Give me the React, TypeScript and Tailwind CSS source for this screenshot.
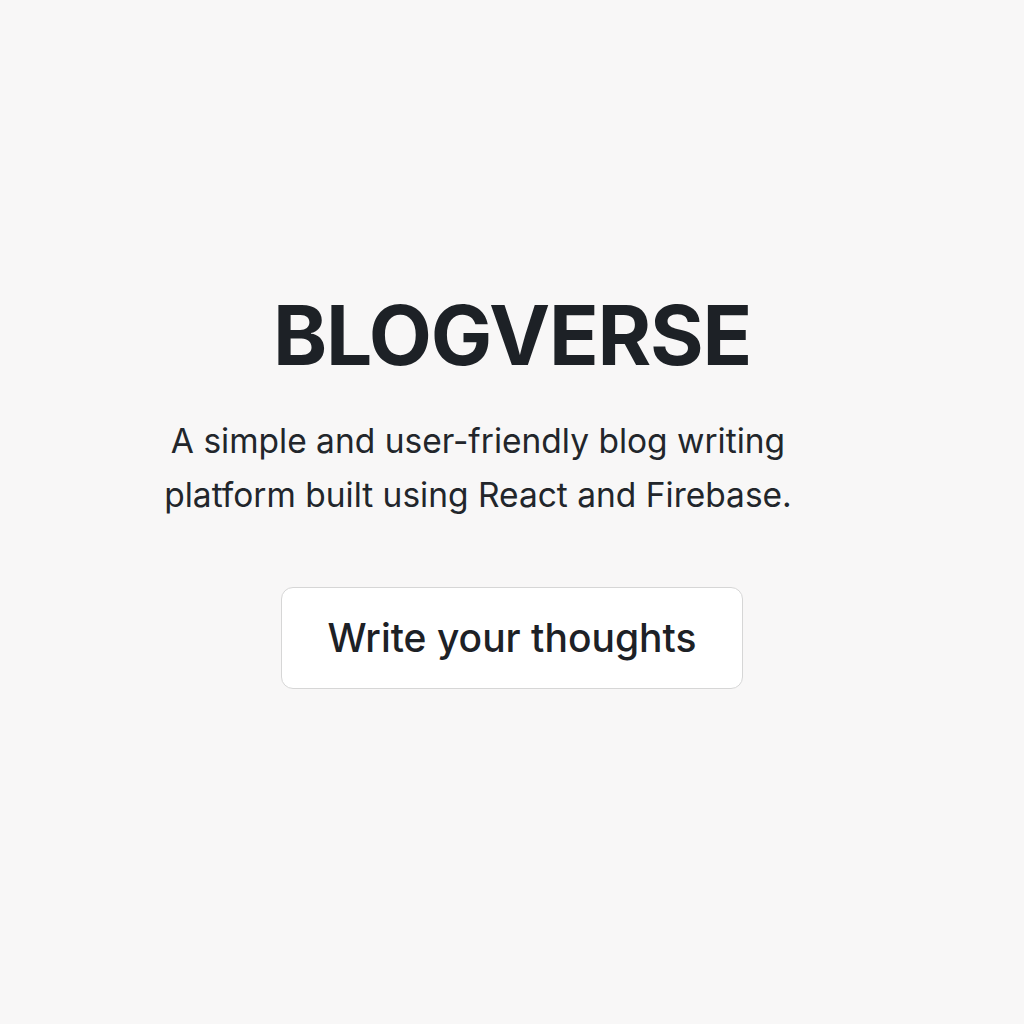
export default function App() {
    return (
        <div className="flex h-[1024px] w-full flex-col items-center bg-[#f8f7f7] font-['Inter',sans-serif] text-[#1d2126]">

            <h1 className="mt-[290px] text-[82px] font-bold leading-[92px] tracking-[-1.3px]">
                BLOGVERSE
            </h1>

            <p className="mr-[68px] mt-[32px] w-[680px] text-center text-[33.5px] leading-[54px] text-[#22262b]">
                A simple and user-friendly blog writing platform built using React and Firebase.
            </p>

            <button className="mt-[65px] h-[102px] w-[462px] rounded-[12px] border border-[#d6d6d6] bg-white text-[39px] font-medium text-[#1d2126]">
                Write your thoughts
            </button>

        </div>
    );
}
